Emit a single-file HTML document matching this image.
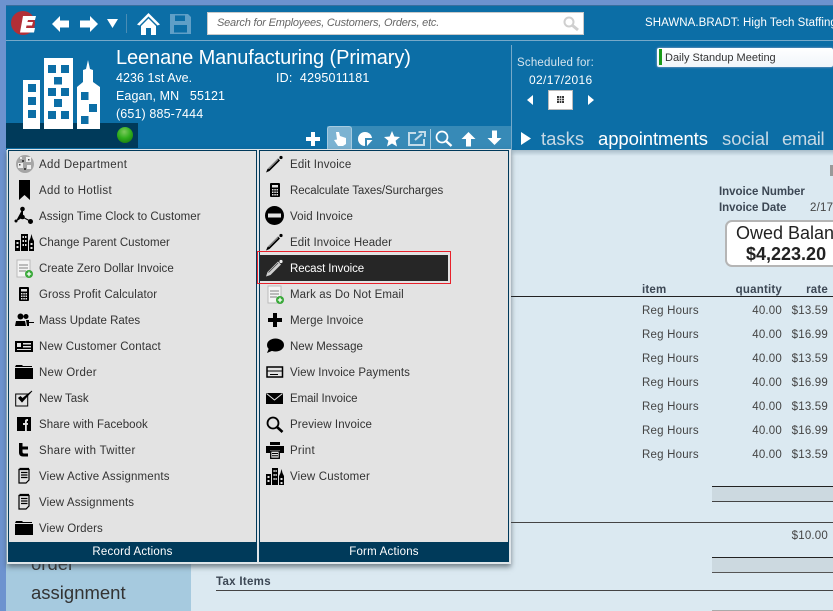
<!DOCTYPE html>
<html><head><meta charset="utf-8"><style>
html,body{margin:0;padding:0;width:833px;height:611px;overflow:hidden;background:#6d93cf}
body{position:relative;font-family:"Liberation Sans",sans-serif}
.a{position:absolute;white-space:nowrap}
svg{position:absolute;overflow:visible}
.m{position:absolute;font-size:11.5px;color:#333;white-space:nowrap;line-height:14px}
.d{position:absolute;font-size:11.5px;color:#444;white-space:nowrap;line-height:14px;letter-spacing:.2px}
.r{text-align:right}
</style></head><body>
<div class="a" style="left:6px;top:5px;width:827px;height:145px;background:#0c6ea6"></div>
<div class="a" style="left:6px;top:5px;width:827px;height:1px;background:#3a6f9e"></div>
<div class="a" style="left:6px;top:40px;width:827px;height:1px;background:#76a9c9"></div>

<!-- logo -->
<svg style="left:11px;top:11px" width="26" height="26" viewBox="0 0 26 26"><circle cx="12" cy="12" r="12" fill="#b22f37"/><path d="M12 5H25L24 9H17L16.400 11H22L21 14.500H15.500L15 17H24L23 21.500H9Z" fill="#fff"/></svg>
<!-- nav -->
<svg style="left:51px;top:15px" width="20" height="18" viewBox="0 0 20 18"><path d="M1 9 9 1V5.500H18V12.500H9V17Z" fill="#fff"/></svg>
<svg style="left:79px;top:15px" width="20" height="18" viewBox="0 0 20 18"><path d="M19 9 11 1V5.500H1V12.500H11V17Z" fill="#fff"/></svg>
<svg style="left:106px;top:18px" width="13" height="11" viewBox="0 0 13 11"><path d="M1 1H12L6.500 10Z" fill="#fff"/></svg>
<div class="a" style="left:126px;top:14px;width:1px;height:19px;background:#4a8db5"></div>
<svg style="left:137px;top:13px" width="23" height="22" viewBox="0 0 23 22"><path d="M0 11.500 11.500 0 23 11.500 20.500 12.500 11.500 3.500 2.500 12.500Z" fill="#fff"/><path d="M4 13 11.500 5.500 19 13V22H14V15H9V22H4Z" fill="#fff"/></svg>
<svg style="left:170px;top:14px" width="22" height="20" viewBox="0 0 22 20"><path d="M0 0H18L21 3V20H0ZM5 1.500V7H15V1.500ZM4 11V18.500H17V11Z" fill="#5f9fc7" fill-rule="evenodd"/></svg>
<!-- search -->
<div class="a" style="left:207px;top:12px;width:377px;height:23px;background:#fff;border:1px solid #c9c9c9;box-sizing:border-box"></div>
<div class="a" style="left:217px;top:17px;font-size:11px;font-style:italic;color:#666;letter-spacing:-.2px">Search for Employees, Customers, Orders, etc.</div>
<svg style="left:563px;top:16px" width="16" height="15" viewBox="0 0 16 15"><circle cx="6" cy="6" r="4.500" fill="none" stroke="#cfcfcf" stroke-width="2"/><path d="M9.500 9.500 15 14" stroke="#cfcfcf" stroke-width="3"/></svg>
<div class="a" style="left:645px;top:17px;font-size:11.5px;color:#fff;letter-spacing:.05px">SHAWNA.BRADT: High Tech Staffing</div>

<!-- building -->
<div class="a" style="left:6px;top:123px;width:132px;height:25px;background:#003a5a"></div>
<svg style="left:0;top:0" width="110" height="135" viewBox="0 0 110 135">
<path d="M23 80H40V129H23Z M44 58H73V129H44Z M77 129V87L83 82V70L86 69 88 60 90 69 93 70V82L100 87V129Z" fill="#fff"/>
<g fill="#0c6ea6"><rect x="28" y="84" width="8" height="8"/><rect x="28" y="97" width="8" height="8"/><rect x="28" y="110" width="8" height="8"/>
<rect x="48" y="65" width="8" height="8"/><rect x="61" y="65" width="8" height="8"/><rect x="54" y="77" width="8" height="7.500"/><rect x="48" y="88" width="8" height="8"/><rect x="61" y="88" width="8" height="8"/><rect x="54" y="99" width="8" height="8"/><rect x="48" y="111" width="8" height="8"/><rect x="61" y="111" width="8" height="8"/>
<rect x="81" y="92" width="7.500" height="8"/><rect x="89" y="104" width="8" height="8"/><rect x="81" y="116" width="7.500" height="8"/></g></svg>
<svg style="left:117px;top:127px" width="17" height="17" viewBox="0 0 17 17"><defs><radialGradient id="g" cx=".45" cy=".3" r=".75"><stop offset="0" stop-color="#7cc95c"/><stop offset=".55" stop-color="#2fae1c"/><stop offset="1" stop-color="#1b7d10"/></radialGradient></defs><circle cx="8" cy="8" r="8" fill="url(#g)"/></svg>

<div class="a" style="left:116px;top:46px;font-size:20px;color:#fff;line-height:24px;letter-spacing:-.1px">Leenane Manufacturing (Primary)</div>
<div class="a" style="left:116px;top:71px;font-size:12.5px;color:#fff;line-height:15px;letter-spacing:.05px">4236 1st Ave.</div>
<div class="a" style="left:276px;top:71px;font-size:12.5px;color:#fff;line-height:15px;letter-spacing:.2px">ID:&nbsp; 4295011181</div>
<div class="a" style="left:116px;top:89px;font-size:12.5px;color:#fff;line-height:15px;letter-spacing:.08px;white-space:pre">Eagan, MN   55121</div>
<div class="a" style="left:116px;top:107px;font-size:12.5px;color:#fff;line-height:15px;letter-spacing:.13px">(651) 885-7444</div>

<!-- toolbar -->
<div class="a" style="left:327px;top:126px;width:184px;height:24px;background:#378ab7"></div>
<div class="a" style="left:327px;top:126px;width:25px;height:24px;background:#7cb3d2;border:1px solid #a6cbe0;border-bottom:0;border-radius:3px 3px 0 0;box-sizing:border-box"></div>
<svg style="left:305px;top:131px" width="16" height="16" viewBox="0 0 16 16"><path d="M6 1H10V6H15V10H10V15H6V10H1V6H6Z" fill="#fff"/></svg>
<svg style="left:333px;top:131px" width="16" height="16" viewBox="0 0 16 16"><path d="M3 1 6 1 7 5 13 7 13 13 10 15 5 15 1 9 4 8.500Z" fill="#fff"/></svg>
<svg style="left:357px;top:131px" width="16" height="16" viewBox="0 0 16 16"><path d="M8 1A7 7 0 0 1 15 7H8V15A7 7 0 0 1 8 1Z M10 9H15.500L10 15Z" fill="#fff"/></svg>
<svg style="left:383px;top:130px" width="18" height="18" viewBox="0 0 18 18"><path d="M9 1 11.300 6.500 17 7 12.600 10.800 14 16.500 9 13.500 4 16.500 5.400 10.800 1 7 6.700 6.500Z" fill="#fff"/></svg>
<svg style="left:408px;top:131px" width="18" height="15" viewBox="0 0 18 15"><path d="M8 2H1V14H16V8" fill="none" stroke="#c3dcea" stroke-width="2"/><path d="M7 9 14 3M10.500 1H17V6" fill="none" stroke="#c3dcea" stroke-width="2"/></svg>
<div class="a" style="left:430px;top:129px;width:1px;height:20px;background:#a6cbe0"></div>
<svg style="left:435px;top:130px" width="18" height="17" viewBox="0 0 18 17"><circle cx="7" cy="7" r="5.500" fill="none" stroke="#fff" stroke-width="1.700"/><path d="M11 11 16.500 16" stroke="#fff" stroke-width="2.400"/></svg>
<svg style="left:461px;top:131px" width="15" height="16" viewBox="0 0 15 16"><path d="M7.500 1 14.500 8H10V15.500H5V8H.5Z" fill="#fff"/></svg>
<svg style="left:487px;top:130px" width="15" height="16" viewBox="0 0 15 16"><path d="M7.500 15 14.500 8H10V.5H5V8H.5Z" fill="#fff"/></svg>

<!-- right header -->
<div class="a" style="left:511px;top:45px;width:1px;height:105px;background:#76a9c9"></div>
<div class="a" style="left:517px;top:57px;font-size:11.5px;color:#d5e4ee;letter-spacing:.2px">Scheduled for:</div>
<div class="a" style="left:529px;top:73px;font-size:12px;color:#fff;letter-spacing:.35px">02/17/2016</div>
<svg style="left:527px;top:95px" width="7" height="10" viewBox="0 0 7 10"><path d="M6 0V10L0 5Z" fill="#fff"/></svg>
<svg style="left:587px;top:95px" width="7" height="10" viewBox="0 0 7 10"><path d="M1 0V10L7 5Z" fill="#fff"/></svg>
<div class="a" style="left:548px;top:90px;width:25px;height:20px;background:#fff;border:1px solid #bbb;box-sizing:border-box"></div>
<svg style="left:557px;top:96px" width="7" height="7" viewBox="0 0 7 7"><path d="M0 0H7V7H0Z" fill="#333"/><path d="M2.300 0V7M4.700 0V7M0 2.300H7M0 4.700H7" stroke="#fff" stroke-width=".7"/></svg>

<div class="a" style="left:657px;top:48px;width:176px;height:19px;background:linear-gradient(#fff,#f0f5fa);border-radius:2px;box-shadow:0 0 2px #aac"></div>
<div class="a" style="left:659px;top:49px;width:3px;height:16px;background:#1a9a1a"></div>
<div class="a" style="left:665px;top:52px;font-size:11px;color:#333;letter-spacing:0">Daily Standup Meeting</div>

<svg style="left:520px;top:131px" width="12" height="15" viewBox="0 0 12 15"><path d="M1 1 11 7.500 1 14Z" fill="#fff"/></svg>
<div class="a" style="left:541px;top:128px;font-size:18.500px;color:#c6d8e4;line-height:22px;letter-spacing:0">tasks</div>
<div class="a" style="left:598px;top:128px;font-size:18.500px;color:#fff;line-height:22px;letter-spacing:-.1px">appointments</div>
<div class="a" style="left:722px;top:128px;font-size:18.500px;color:#c6d8e4;line-height:22px;letter-spacing:-.05px">social</div>
<div class="a" style="left:782px;top:128px;font-size:18.500px;color:#c6d8e4;line-height:22px;letter-spacing:-.4px">email</div>

<!-- content -->
<div class="a" style="left:6px;top:150px;width:827px;height:461px;background:#dbe9f1"></div>
<div class="a" style="left:6px;top:150px;width:185px;height:461px;background:#a6cadf"></div>
<div class="a" style="left:511px;top:150px;width:322px;height:6px;background:linear-gradient(#a9bdc9,#dbe9f1)"></div>
<div class="a" style="left:31px;top:553px;font-size:18.500px;color:#333;line-height:22px">order</div>
<div class="a" style="left:31px;top:582px;font-size:18.500px;color:#333;line-height:22px">assignment</div>

<div class="a" style="left:830px;top:165px;width:3px;height:11px;background:#999"></div>
<div class="d" style="left:719px;top:185px;font-weight:bold;color:#3c4754;letter-spacing:-.03px">Invoice Number</div>
<div class="d" style="left:719px;top:201px;font-weight:bold;color:#3c4754;letter-spacing:-.03px">Invoice Date</div>
<div class="d" style="left:810px;top:201px">2/17</div>
<div class="a" style="left:725px;top:220px;width:130px;height:47px;background:#fff;border:2px solid #b5b5b5;border-radius:7px;box-sizing:border-box"></div>
<div class="a" style="left:736px;top:222px;font-size:18px;color:#222;line-height:22px">Owed Balan</div>
<div class="a" style="left:746px;top:244px;font-size:18px;font-weight:bold;color:#222;line-height:21px">$4,223.20</div>

<div class="d" style="left:642px;top:283px;font-weight:bold;color:#3c4754">item</div>
<div class="d r" style="left:700px;width:82px;top:283px;font-weight:bold;color:#3c4754">quantity</div>
<div class="d r" style="left:790px;width:38px;top:283px;font-weight:bold;color:#3c4754">rate</div>
<div class="a" style="left:511px;top:296px;width:322px;height:1px;background:#222"></div>

<div class="d" style="left:642px;top:304px">Reg Hours</div><div class="d r" style="left:740px;width:42px;top:304px">40.00</div><div class="d r" style="left:780px;width:48px;top:304px">$13.59</div>
<div class="d" style="left:642px;top:328px">Reg Hours</div><div class="d r" style="left:740px;width:42px;top:328px">40.00</div><div class="d r" style="left:780px;width:48px;top:328px">$16.99</div>
<div class="d" style="left:642px;top:352px">Reg Hours</div><div class="d r" style="left:740px;width:42px;top:352px">40.00</div><div class="d r" style="left:780px;width:48px;top:352px">$13.59</div>
<div class="d" style="left:642px;top:376px">Reg Hours</div><div class="d r" style="left:740px;width:42px;top:376px">40.00</div><div class="d r" style="left:780px;width:48px;top:376px">$16.99</div>
<div class="d" style="left:642px;top:400px">Reg Hours</div><div class="d r" style="left:740px;width:42px;top:400px">40.00</div><div class="d r" style="left:780px;width:48px;top:400px">$13.59</div>
<div class="d" style="left:642px;top:424px">Reg Hours</div><div class="d r" style="left:740px;width:42px;top:424px">40.00</div><div class="d r" style="left:780px;width:48px;top:424px">$16.99</div>
<div class="d" style="left:642px;top:448px">Reg Hours</div><div class="d r" style="left:740px;width:42px;top:448px">40.00</div><div class="d r" style="left:780px;width:48px;top:448px">$13.59</div>

<div class="a" style="left:712px;top:486px;width:121px;height:16px;background:#ccd9e0;border-top:1px solid #222;border-bottom:1px solid #444;box-sizing:border-box"></div>
<div class="a" style="left:511px;top:522px;width:322px;height:1px;background:#444"></div>
<div class="d r" style="left:780px;width:48px;top:529px">$10.00</div>
<div class="a" style="left:712px;top:557px;width:121px;height:16px;background:#ccd9e0;border-top:1px solid #222;border-bottom:1px solid #555;box-sizing:border-box"></div>
<div class="a" style="left:216px;top:590px;width:617px;height:1px;background:#444"></div>
<div class="d" style="left:216px;top:575px;font-weight:bold;color:#3c4754;letter-spacing:.3px">Tax Items</div>
<div class="a" style="left:712px;top:610px;width:121px;height:1px;background:#aaa"></div>

<!-- menu panels -->
<div class="a" style="left:7px;top:149px;width:504px;height:415px;background:#dfe5e9;box-shadow:0 3px 5px rgba(60,70,80,.65)"></div>
<div class="a" style="left:8px;top:150px;width:249px;height:412px;background:#e3e3e3;border:1px solid #00395a;box-sizing:border-box"></div>
<div class="a" style="left:259px;top:150px;width:250px;height:412px;background:#e3e3e3;border:1px solid #00395a;box-sizing:border-box"></div>
<div class="a" style="left:8px;top:542px;width:249px;height:20px;background:#003a5a;color:#fff;font-size:11.5px;line-height:21px;text-align:center;letter-spacing:.2px">Record Actions</div>
<div class="a" style="left:259px;top:542px;width:250px;height:20px;background:#003a5a;color:#fff;font-size:11.5px;line-height:21px;text-align:center;letter-spacing:.2px">Form Actions</div>

<div class="a" style="left:260px;top:255px;width:188px;height:26px;background:#262626"></div>
<div class="a" style="left:257px;top:251px;width:194px;height:33px;border:1px solid #e8202a;box-sizing:border-box"></div>

<!-- left items -->
<div class="m" style="left:39px;top:158px;letter-spacing:.32px">Add Department</div>
<div class="m" style="left:39px;top:184px;letter-spacing:.33px">Add to Hotlist</div>
<div class="m" style="left:39px;top:210px;letter-spacing:.04px">Assign Time Clock to Customer</div>
<div class="m" style="left:39px;top:236px;letter-spacing:.02px">Change Parent Customer</div>
<div class="m" style="left:39px;top:262px;letter-spacing:.02px">Create Zero Dollar Invoice</div>
<div class="m" style="left:39px;top:288px;letter-spacing:.11px">Gross Profit Calculator</div>
<div class="m" style="left:39px;top:314px;letter-spacing:.01px">Mass Update Rates</div>
<div class="m" style="left:39px;top:340px;letter-spacing:.15px">New Customer Contact</div>
<div class="m" style="left:39px;top:366px;letter-spacing:.25px">New Order</div>
<div class="m" style="left:39px;top:392px;letter-spacing:0">New Task</div>
<div class="m" style="left:39px;top:418px;letter-spacing:.04px">Share with Facebook</div>
<div class="m" style="left:39px;top:444px;letter-spacing:.3px">Share with Twitter</div>
<div class="m" style="left:39px;top:470px;letter-spacing:.16px">View Active Assignments</div>
<div class="m" style="left:39px;top:496px;letter-spacing:.13px">View Assignments</div>
<div class="m" style="left:39px;top:522px;letter-spacing:.07px">View Orders</div>

<!-- right items -->
<div class="m" style="left:290px;top:158px;letter-spacing:.16px">Edit Invoice</div>
<div class="m" style="left:290px;top:184px;letter-spacing:-.07px">Recalculate Taxes/Surcharges</div>
<div class="m" style="left:290px;top:210px;letter-spacing:.08px">Void Invoice</div>
<div class="m" style="left:290px;top:236px;letter-spacing:.09px">Edit Invoice Header</div>
<div class="m" style="left:290px;top:262px;color:#fff;letter-spacing:-.1px">Recast Invoice</div>
<div class="m" style="left:290px;top:288px;letter-spacing:.1px">Mark as Do Not Email</div>
<div class="m" style="left:290px;top:314px;letter-spacing:.1px">Merge Invoice</div>
<div class="m" style="left:290px;top:340px;letter-spacing:0">New Message</div>
<div class="m" style="left:290px;top:366px;letter-spacing:.06px">View Invoice Payments</div>
<div class="m" style="left:290px;top:392px;letter-spacing:-.07px">Email Invoice</div>
<div class="m" style="left:290px;top:418px;letter-spacing:.1px">Preview Invoice</div>
<div class="m" style="left:290px;top:444px;letter-spacing:.25px">Print</div>
<div class="m" style="left:290px;top:470px;letter-spacing:.17px">View Customer</div>

<!-- left icons -->
<svg style="left:15px;top:154px" width="20" height="20" viewBox="0 0 20 20"><circle cx="10" cy="10" r="9" fill="#a5a5a5"/><g fill="#eee"><rect x="3" y="9" width="5" height="5"/><rect x="11" y="3" width="5" height="5"/><rect x="12" y="11" width="4" height="4"/><rect x="5" y="3" width="2" height="2"/></g><g fill="#444"><rect x="7" y="6" width="2" height="2"/><rect x="9" y="14" width="2" height="2"/><rect x="4" y="10" width="1.500" height="1.500"/><rect x="13" y="5" width="1.500" height="1.500"/></g></svg>
<svg style="left:19px;top:180px" width="12" height="20" viewBox="0 0 12 20"><path d="M0 0H11V20L5.500 15 0 20Z" fill="#000"/></svg>
<svg style="left:14px;top:206px" width="20" height="19" viewBox="0 0 20 19"><path d="M8.500 3V11L2 15M8.500 11 16 15" stroke="#000" stroke-width="1"/><circle cx="8.500" cy="3" r="2.300"/><circle cx="8.500" cy="11" r="2.300"/><circle cx="2" cy="15" r="1.500"/><circle cx="16.500" cy="15.500" r="2.500"/></svg>
<svg style="left:15px;top:233px" width="19" height="18" viewBox="0 0 19 18"><path d="M0 7H5V18H0ZM6 1H13V18H6ZM14 18V8L15.500 5 16.500 1 17.500 5 19 8V18Z"/><g fill="#e3e3e3"><rect x="1.500" y="9" width="2" height="2"/><rect x="1.500" y="13" width="2" height="2"/><rect x="7.500" y="3" width="1.500" height="2"/><rect x="10" y="3" width="1.500" height="2"/><rect x="7.500" y="7" width="1.500" height="2"/><rect x="10" y="7" width="1.500" height="2"/><rect x="7.500" y="11" width="1.500" height="2"/><rect x="10" y="11" width="1.500" height="2"/><rect x="15.500" y="10" width="2" height="2"/><rect x="15.500" y="14" width="2" height="2"/></g></svg>
<svg style="left:17px;top:259px" width="17" height="20" viewBox="0 0 17 20"><rect x="0" y="1" width="13" height="17" fill="#f4f4f4" stroke="#bbb"/><path d="M2 6H11M2 9H11M2 12H9" stroke="#bbb" stroke-width="2"/><circle cx="12" cy="15" r="4" fill="#38a838"/><path d="M12 12.800V17.200M9.800 15H14.200" stroke="#fff" stroke-width="1.300"/></svg>
<svg style="left:19px;top:287px" width="11" height="14" viewBox="0 0 11 14"><rect width="10" height="14" rx="1"/><rect x="2" y="2" width="6" height="2.500" fill="#e3e3e3"/><g fill="#e3e3e3"><rect x="2" y="6" width="1.500" height="1.500"/><rect x="4.300" y="6" width="1.500" height="1.500"/><rect x="6.500" y="6" width="1.500" height="1.500"/><rect x="2" y="8.500" width="1.500" height="1.500"/><rect x="4.300" y="8.500" width="1.500" height="1.500"/><rect x="6.500" y="8.500" width="1.500" height="1.500"/><rect x="2" y="11" width="1.500" height="1.500"/><rect x="4.300" y="11" width="1.500" height="1.500"/><rect x="6.500" y="11" width="1.500" height="1.500"/></g></svg>
<svg style="left:15px;top:313px" width="19" height="14" viewBox="0 0 19 14"><circle cx="5.500" cy="3.500" r="3"/><path d="M0 13 1 8H10L11 13Z"/><circle cx="11" cy="3.500" r="2.500"/><path d="M11 7H14V9H19V10H14V13H12Z"/></svg>
<svg style="left:15px;top:341px" width="19" height="12" viewBox="0 0 19 12"><rect width="18" height="11"/><g fill="#e3e3e3"><rect x="2" y="2" width="4" height="4"/><rect x="8" y="2" width="8" height="1.500"/><rect x="8" y="5" width="8" height="1.500"/><rect x="2" y="8" width="14" height="1"/></g></svg>
<svg style="left:15px;top:365px" width="18" height="15" viewBox="0 0 18 15"><path d="M1 0H7L8 1H17V2H0ZM0 3H18V14H0Z"/></svg>
<svg style="left:15px;top:390px" width="18" height="17" viewBox="0 0 18 17"><rect x=".7" y="4" width="12" height="12" fill="none" stroke="#000" stroke-width="1"/><path d="M3.500 8 7 12 17 1 7.500 8.500 5.500 6.500Z" stroke="#000" stroke-width=".8"/></svg>
<svg style="left:17px;top:417px" width="14" height="14" viewBox="0 0 14 14"><rect width="14" height="14" fill="#000"/><path d="M8 14V8H6V6H8V4C8 2.500 9 2 11 2V4C10 4 9.800 4.200 9.800 5V6H11L10.800 8H9.800V14Z" fill="#e3e3e3"/></svg>
<svg style="left:19px;top:443px" width="10" height="14" viewBox="0 0 10 14"><path d="M0 0H3.500V3.500H9V6.500H3.500V8.500C3.500 10 4 10.500 5.500 10.500H9V13.500H4C1.500 13.500 0 12 0 9.500Z"/></svg>
<svg style="left:18px;top:467px" width="13" height="18" viewBox="0 0 13 18"><path d="M1 2.500H11V13L8 16H1Z" fill="#e3e3e3" stroke="#000" stroke-width="1.200"/><path d="M1.500 1.500H11M3 5.500H9.500M3 8H9.500M3 10.500H9.500" stroke="#000" stroke-width="1.200"/></svg>
<svg style="left:18px;top:493px" width="13" height="18" viewBox="0 0 13 18"><path d="M1 2.500H11V13L8 16H1Z" fill="#e3e3e3" stroke="#000" stroke-width="1.200"/><path d="M1.500 1.500H11M3 5.500H9.500M3 8H9.500M3 10.500H9.500" stroke="#000" stroke-width="1.200"/></svg>
<svg style="left:15px;top:521px" width="18" height="15" viewBox="0 0 18 15"><path d="M1 0H7L8 1H17V2H0ZM0 3H18V14H0Z"/></svg>

<!-- right icons -->
<svg style="left:266px;top:155px" width="18" height="18" viewBox="0 0 18 18"><path d="M0 17.500 1.500 14 12 3.500 14 5.500 3.500 16Z" fill="#000"/><path d="M2.500 14 12 4.500" stroke="#e3e3e3" stroke-width=".6"/><circle cx="15" cy="2.500" r="1.600"/></svg>
<svg style="left:270px;top:183px" width="11" height="14" viewBox="0 0 11 14"><rect width="10" height="14" rx="1"/><rect x="2" y="2" width="6" height="2.500" fill="#e3e3e3"/><g fill="#e3e3e3"><rect x="2" y="6" width="1.500" height="1.500"/><rect x="4.300" y="6" width="1.500" height="1.500"/><rect x="6.500" y="6" width="1.500" height="1.500"/><rect x="2" y="8.500" width="1.500" height="1.500"/><rect x="4.300" y="8.500" width="1.500" height="1.500"/><rect x="6.500" y="8.500" width="1.500" height="1.500"/><rect x="2" y="11" width="1.500" height="1.500"/><rect x="4.300" y="11" width="1.500" height="1.500"/><rect x="6.500" y="11" width="1.500" height="1.500"/></g></svg>
<svg style="left:265px;top:206px" width="19" height="19" viewBox="0 0 19 19"><circle cx="9.500" cy="9.500" r="9.500"/><rect x="3" y="7.500" width="13" height="4" fill="#e3e3e3"/></svg>
<svg style="left:266px;top:233px" width="18" height="18" viewBox="0 0 18 18"><path d="M0 17.500 1.500 14 12 3.500 14 5.500 3.500 16Z" fill="#000"/><path d="M2.500 14 12 4.500" stroke="#e3e3e3" stroke-width=".6"/><circle cx="15" cy="2.500" r="1.600"/></svg>
<svg style="left:266px;top:259px" width="18" height="18" viewBox="0 0 18 18"><path d="M0 17.500 1.500 13 12 2.500 15 5.500 4.500 16Z" fill="#cfcfcf"/><path d="M2.500 13.500 12 4" stroke="#444" stroke-width=".8"/><circle cx="15" cy="2.500" r="1.600" fill="#eee"/></svg>
<svg style="left:268px;top:285px" width="17" height="20" viewBox="0 0 17 20"><rect x="0" y="1" width="13" height="17" fill="#f4f4f4" stroke="#bbb"/><path d="M2 6H11M2 9H11M2 12H9" stroke="#bbb" stroke-width="2"/><circle cx="12" cy="15" r="4" fill="#38a838"/><path d="M12 12.800V17.200M9.800 15H14.200" stroke="#fff" stroke-width="1.300"/></svg>
<svg style="left:268px;top:313px" width="14" height="14" viewBox="0 0 14 14"><path d="M5 0H9V5H14V9H9V14H5V9H0V5H5Z"/></svg>
<svg style="left:266px;top:338px" width="18" height="16" viewBox="0 0 18 16"><ellipse cx="9.500" cy="7" rx="8.500" ry="6.500"/><path d="M3 10 1 15 8 12Z"/></svg>
<svg style="left:266px;top:366px" width="18" height="13" viewBox="0 0 18 13"><rect x="1" y="1" width="15.500" height="10" fill="none" stroke="#000" stroke-width="1.500"/><rect x="1" y="4.500" width="16" height="1"/><rect x="4" y="8" width="8" height="1"/></svg>
<svg style="left:266px;top:393px" width="17" height="11" viewBox="0 0 17 11"><rect width="17" height="11"/><path d="M.5 .5 8.500 7 16.500 .5" fill="none" stroke="#e3e3e3" stroke-width="1"/></svg>
<svg style="left:266px;top:416px" width="18" height="17" viewBox="0 0 18 17"><circle cx="7" cy="7" r="5.500" fill="none" stroke="#000" stroke-width="1.800"/><path d="M11 11 16.500 16" stroke="#000" stroke-width="2.600"/></svg>
<svg style="left:266px;top:442px" width="18" height="17" viewBox="0 0 18 17"><path d="M4 0H14V3H4Z"/><path d="M0 4H18V11H14V8H4V11H0Z"/><rect x="4.700" y="9" width="8.600" height="7.300" fill="#e3e3e3" stroke="#000" stroke-width="1.300"/><path d="M6 11.500H12M6 13.800H12" stroke="#000"/></svg>
<svg style="left:266px;top:468px" width="18" height="17" viewBox="0 0 18 17"><path d="M0 6H5V17H0ZM6 0H12V17H6ZM13 17V8L14.500 5 15.500 1 16.500 5 18 8V17Z"/><g fill="#e3e3e3"><rect x="1.500" y="8" width="2" height="2"/><rect x="1.500" y="12" width="2" height="2"/><rect x="7.500" y="2" width="1.200" height="2"/><rect x="9.500" y="2" width="1.200" height="2"/><rect x="7.500" y="6" width="1.200" height="2"/><rect x="9.500" y="6" width="1.200" height="2"/><rect x="7.500" y="10" width="1.200" height="2"/><rect x="9.500" y="10" width="1.200" height="2"/><rect x="14.500" y="10" width="2" height="2"/><rect x="14.500" y="14" width="2" height="2"/></g></svg>
</body></html>
